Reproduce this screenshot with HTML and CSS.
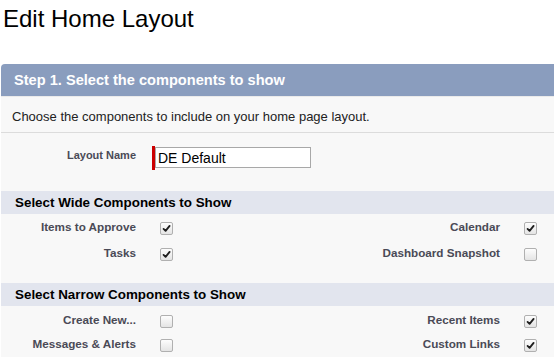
FILE: index.html
```html
<!DOCTYPE html>
<html>
<head>
<meta charset="utf-8">
<link rel="stylesheet" href="styles.css">
</head>
<body>
<h1 class="title">Edit Home Layout</h1>
<div class="panel">
  <div class="panel-head">Step 1. Select the components to show</div>
  <div class="panel-body">
    <p class="desc">Choose the components to include on your home page layout.</p>
    <div class="name-row">
      <label class="name-label">Layout Name</label>
      <span class="req"></span>
      <input class="name-input" type="text" value="DE Default">
    </div>
    <div class="section-head">Select Wide Components to Show</div>
    <div class="grid wide">
      <span class="lbl">Items to Approve</span><span class="cb on"><svg viewBox="0 0 12 12"><path d="M2.8 6.4 L5 8.6 L9.4 3.2" /></svg></span>
      <span class="lbl">Calendar</span><span class="cb on"><svg viewBox="0 0 12 12"><path d="M2.8 6.4 L5 8.6 L9.4 3.2" /></svg></span>
      <span class="lbl">Tasks</span><span class="cb on"><svg viewBox="0 0 12 12"><path d="M2.8 6.4 L5 8.6 L9.4 3.2" /></svg></span>
      <span class="lbl">Dashboard Snapshot</span><span class="cb"></span>
    </div>
    <div class="section-head">Select Narrow Components to Show</div>
    <div class="grid narrow">
      <span class="lbl">Create New...</span><span class="cb"></span>
      <span class="lbl">Recent Items</span><span class="cb on"><svg viewBox="0 0 12 12"><path d="M2.8 6.4 L5 8.6 L9.4 3.2" /></svg></span>
      <span class="lbl">Messages &amp; Alerts</span><span class="cb"></span>
      <span class="lbl">Custom Links</span><span class="cb on"><svg viewBox="0 0 12 12"><path d="M2.8 6.4 L5 8.6 L9.4 3.2" /></svg></span>
    </div>
  </div>
</div>
</body>
</html>
```
FILE: styles.css
```css
html, body {
  margin: 0;
  padding: 0;
  overflow: hidden;
  background: #fff;
}
body {
  font-family: "Liberation Sans", Arial, sans-serif;
  color: #000;
}
.title {
  margin: 0;
  padding: 5px 0 0 3px;
  height: 58px;
  box-sizing: border-box;
  font-size: 24px;
  font-weight: normal;
  line-height: 28px;
}
.panel {
  margin: 6px 0 0 1px;
  width: 620px;
}
.panel-head {
  background: #8a9dbe;
  color: #fff;
  font-weight: bold;
  font-size: 14.6px;
  height: 32px;
  line-height: 32px;
  padding-left: 13px;
  border-radius: 4px 0 0 0;
}
.panel-body {
  background: #f8f8f8;
  border-top: 1px solid #eaeaea;
}
.desc {
  margin: 0;
  font-size: 13px;
  color: #222;
  padding: 12px 0 0 11px;
  height: 36px;
  box-sizing: border-box;
  border-bottom: 1px solid #dcdcdc;
  line-height: 16px;
}
.name-row {
  display: flex;
  align-items: flex-start;
  height: 58px;
  padding-top: 13px;
  box-sizing: border-box;
}
.name-label {
  width: 135px;
  text-align: right;
  font-size: 11px;
  font-weight: bold;
  color: #4a4a56;
  padding-top: 2px;
  line-height: 14px;
}
.req {
  width: 3px;
  height: 24px;
  background: #c00;
  margin-left: 16px;
}
.name-input {
  margin: 1px 0 0 0;
  width: 156px;
  height: 21px;
  box-sizing: border-box;
  border: 1px solid #a8a8a8;
  font-family: "Liberation Sans", Arial, sans-serif;
  font-size: 14px;
  padding: 1px 2px;
  color: #000;
  background: #fff;
  outline: none;
}
.section-head {
  background: #e2e5ee;
  font-weight: bold;
  font-size: 13.4px;
  height: 23px;
  line-height: 23px;
  padding-left: 14px;
  color: #000;
}
.grid {
  display: grid;
  grid-template-columns: 135px 13px 303px 13px;
  column-gap: 24px;
  align-items: center;
  align-content: start;
  box-sizing: border-box;
}
.grid.wide {
  grid-auto-rows: 26px;
  height: 69px;
  padding-top: 1px;
}
.grid.narrow {
  grid-auto-rows: 24px;
  height: 60px;
  padding-top: 3px;
}
.grid .lbl {
  text-align: right;
  font-size: 11.7px;
  font-weight: bold;
  color: #4a4a56;
  line-height: 14px;
  padding-bottom: 2px;
}
.cb {
  width: 11px;
  height: 11px;
  border: 1px solid #b0b0b0;
  border-radius: 2px;
  background: linear-gradient(#fdfdfd, #e4e4e4);
  display: block;
  box-sizing: content-box;
}
.cb svg {
  display: block;
  width: 11px;
  height: 11px;
}
.cb svg path {
  fill: none;
  stroke: #1e1e1e;
  stroke-width: 2;
  stroke-linecap: round;
  stroke-linejoin: round;
}
```
